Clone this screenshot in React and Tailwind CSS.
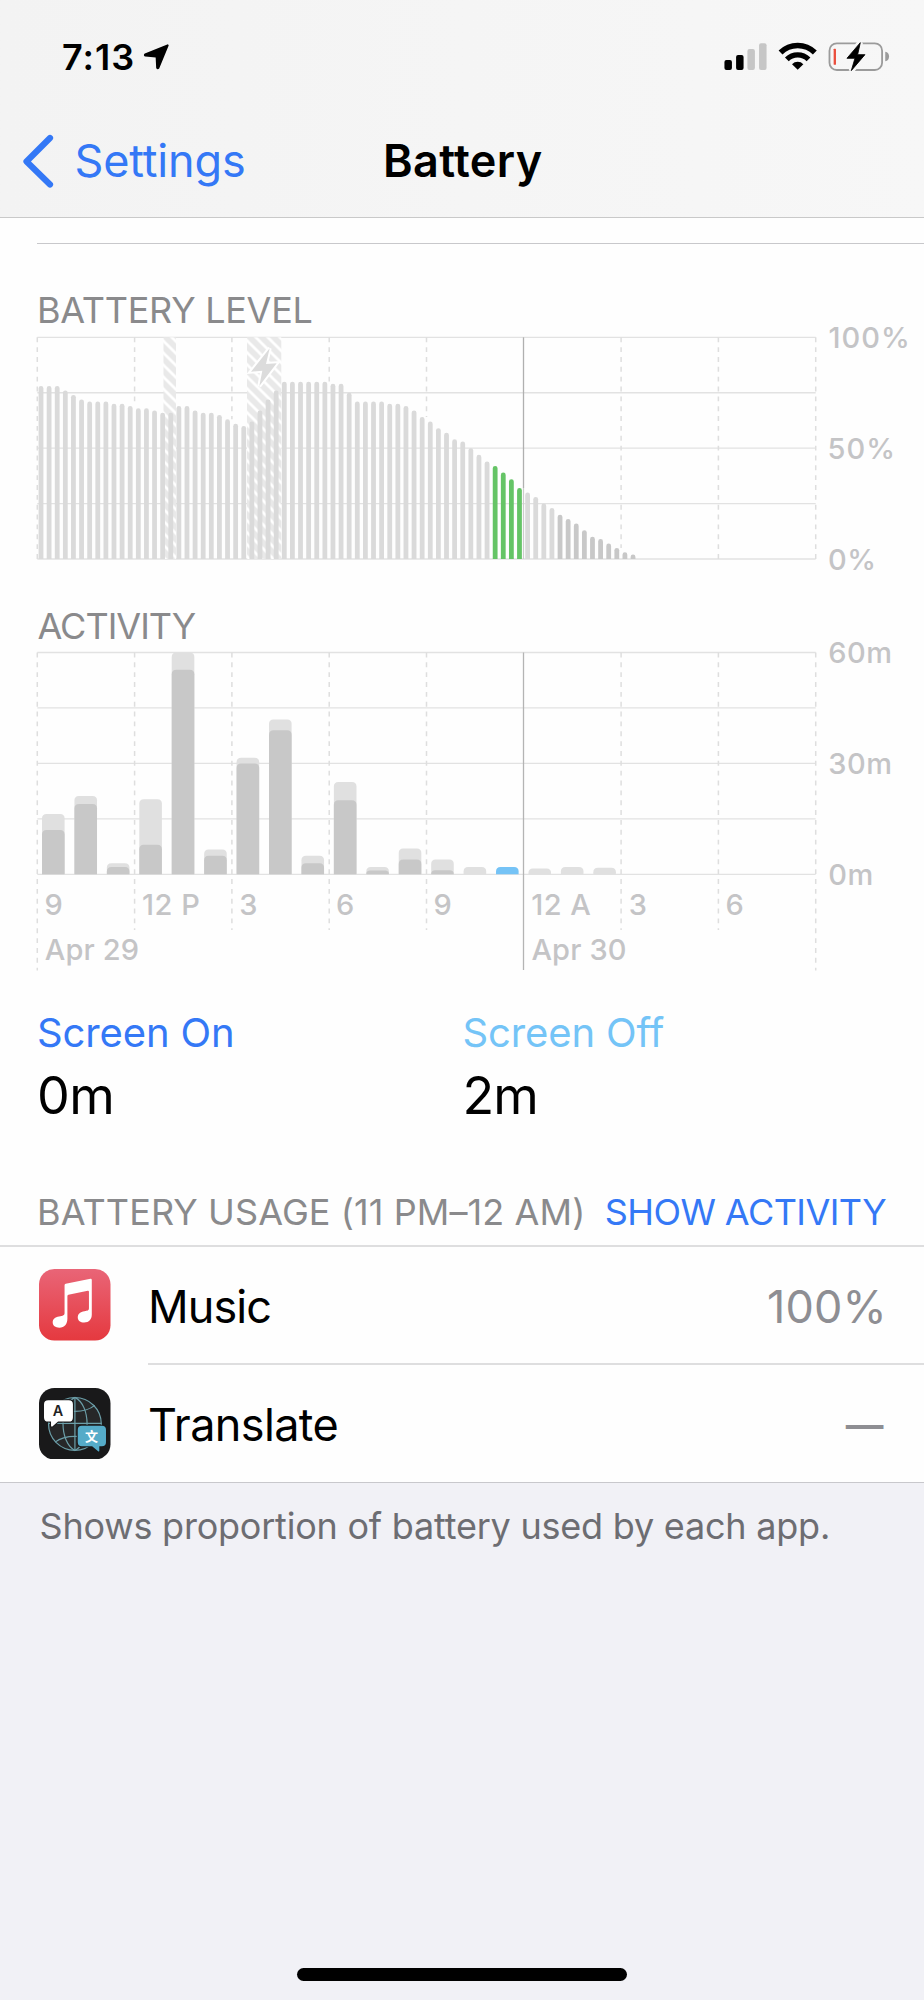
import React from "react";

/* ---------- Data ---------- */

// Battery percentage per 15 minutes, starting at 9 AM on Apr 29.
const LEVELS = [
  78, 78, 78, 76, 74, 72, 71, 71, 71, 70, 70, 69, 68, 68, 67, 66, 66, 69, 69, 67, 66, 66, 65, 63,
  61, 60, 62, 67, 72, 76, 80, 80, 80, 80, 80, 80, 79, 79, 75, 71, 71, 71, 71, 70, 70, 69, 67, 64,
  62, 59, 57, 54, 53, 50, 47, 44, 42, 39, 36, 32, 30, 28, 25, 23, 20, 18, 16, 13, 10, 9, 7, 5, 3, 2,
];

// Minutes per hour: [total, screen on].
const ACTIVITY = [
  [16.3, 12], [21.2, 19], [3, 2], [20.3, 8], [60, 55.3], [6.7, 5], [31.5, 30], [41.9, 39], [5, 3],
  [25, 20], [2, 1], [7, 4], [4, 1.1], [2, 0], [2, 0], [1.6, 0], [2, 0], [1.8, 0],
];
const SELECTED_HOUR = 14;

const LEFT = 37.3;
const STEP = 97.3;
const RIGHT = LEFT + STEP * 8;
const GRID = "#e2e2e2";
const DASH = "#dedede";

/* ---------- Status bar ---------- */

function LocationArrow() {
  return (
    <svg className="ml-[7.500px] h-[27px] w-[27px]" viewBox="427 129 80 80">
      <path
        d="M500 136 L433.500 163 Q431.500 165 434 166 L465 169 Q467.500 169.500 467.500 172 L469 202.500 Q470.500 205 472.500 202.500 Z"
        fill="#000"
        stroke="#000"
        strokeWidth="6"
        strokeLinejoin="round"
      />
    </svg>
  );
}

function StatusIcons() {
  return (
    <svg className="ml-auto mr-[33.300px] h-[33.300px] w-[166.700px]" viewBox="786 120 500 100">
      <rect x="787" y="180" width="22.500" height="30" rx="6" fill="#000" />
      <rect x="822" y="165" width="22.500" height="45" rx="6" fill="#000" />
      <rect x="856" y="147" width="22.500" height="63" rx="6" fill="#c6c6c6" />
      <rect x="891" y="130" width="22.500" height="80" rx="6" fill="#c6c6c6" />
      <path d="M955.500 157.500 A73 73 0 0 1 1058.500 157.500" fill="none" stroke="#000" strokeWidth="16.500" />
      <path d="M974.500 178 A46 46 0 0 1 1039.500 178" fill="none" stroke="#000" strokeWidth="16" />
      <path d="M1007 209.500 L990 192.500 A24.500 24.500 0 0 1 1024 192.500 Z" fill="#000" />
      <rect x="1102.500" y="130" width="158" height="80" rx="22" fill="none" stroke="#9b9b9b" strokeWidth="5.500" />
      <path d="M1270 155.500 A14 14.500 0 0 1 1270 184 Z" fill="#9b9b9b" />
      <rect x="1115" y="146" width="7" height="48.500" rx="2" fill="#eb4e3d" />
      <path
        d="M1195 127 L1154 176 L1178 176 L1168 213 L1210 163 L1187 163 Z"
        fill="#f7f7f7"
        stroke="#f7f7f7"
        strokeWidth="16"
      />
      <path
        d="M1195 128 L1155 175 L1179 175 L1168 212 L1209 164 L1187 164 Z"
        fill="#000"
        stroke="#000"
        strokeWidth="2.500"
        strokeLinejoin="round"
      />
    </svg>
  );
}

/* ---------- Charts ---------- */

function GridLines({ top, step }) {
  return [0, 1, 2, 3, 4].map((i) => (
    <line key={i} x1={LEFT} x2={RIGHT} y1={top + step * i} y2={top + step * i} stroke={GRID} strokeWidth="1.300" />
  ));
}

function AxisText({ x, y, spacing, children }) {
  return (
    <text x={x} y={y} fontSize="29" fontWeight="500" fill="#c4c4c6" style={{ letterSpacing: spacing }}>
      {children}
    </text>
  );
}

function LevelChart() {
  const top = 337.3;
  const height = 221.7;
  const base = top + height;
  const barTop = (v) => base - (v / 100) * height;
  return (
    <svg className="block h-[267px] w-full overflow-visible" viewBox="0 328 924 267">
      <defs>
        <pattern id="hatch" width="12" height="12" patternUnits="userSpaceOnUse" x="163.500" y="341">
          <rect width="12" height="12" fill="#e9e9e9" />
          <path d="M-2 -2 L14 14 M-2 10 L2 14 M10 -2 L14 2" stroke="#fff" strokeWidth="2.700" />
        </pattern>
      </defs>
      <GridLines top={top} step={height / 4} />
      <rect x="163.500" y={top} width="12.500" height={height} fill="url(#hatch)" />
      <rect x="247" y={top} width="34.300" height={height} fill="url(#hatch)" />
      {[0, 1, 2, 3, 4, 6, 7, 8].map((i) => {
        const v = i === 0 ? 0 : LEVELS[i * 12 - 1] || 0;
        const end = Math.max(top, barTop(v));
        return (
          <line key={i} x1={LEFT + STEP * i} x2={LEFT + STEP * i} y1={top} y2={end} stroke={DASH} strokeWidth="1.500" strokeDasharray="4.900 4.950" />
        );
      })}
      <line x1={LEFT + STEP * 5 - 0.3} x2={LEFT + STEP * 5 - 0.3} y1={top} y2={barTop(32)} stroke="#b0b0b0" strokeWidth="1.300" />
      <line x1={LEFT + STEP * 5 - 0.3} x2={LEFT + STEP * 5 - 0.3} y1={barTop(32)} y2={base} stroke="#cdcdcd" strokeWidth="1.200" />
      {LEVELS.map((v, i) => {
        const x = 38.6 + i * 8.11;
        const y = barTop(v);
        const fill = i >= 56 && i < 60 ? "#65c466" : i >= 64 ? "#c8c8c8" : "#dadada";
        const r = Math.min(2.4, base - y);
        return (
          <path
            key={i}
            d={`M${x} ${base} V${y + r} A2.400 2.400 0 0 1 ${x + 4.8} ${y + r} V${base} Z`}
            fill={fill}
          />
        );
      })}
      <path
        d="M749 205 L693 275 L727 272 L718 318 L770 250 L738 252 Z"
        transform="translate(20 280) scale(0.33333)"
        fill="#dcdcdc"
        stroke="#fff"
        strokeWidth="12"
        paintOrder="stroke"
      />
      <AxisText x={828.5} y={348} spacing="1px">100%</AxisText>
      <AxisText x={827.500} y={458.7} spacing="1px">50%</AxisText>
      <AxisText x={828} y={569.7} spacing="0.600px">0%</AxisText>
    </svg>
  );
}

function roundedBar(x, y, base) {
  const w = 22.6;
  const r = Math.min(4.5, base - y);
  return `M${x} ${base} V${y + r} Q${x} ${y} ${x + r} ${y} H${x + w - r} Q${x + w} ${y} ${x + w} ${y + r} V${base} Z`;
}

function ActivityChart() {
  const top = 652.5;
  const height = 221.8;
  const base = top + height;
  const barTop = (m) => base - (m / 60) * height;
  const hours = [
    ["9", 44.5, 0], ["12 P", 142, 0.5], ["3", 239.3, 0], ["6", 336, 0], ["9", 433.5, 0],
    ["12 A", 531.2, 0.5], ["3", 628.7, 0], ["6", 725.5, 0],
  ];
  return (
    <svg className="block h-[338px] w-full overflow-visible" viewBox="0 644 924 338">
      <GridLines top={top} step={height / 4} />
      {[0, 1, 2, 3, 4, 6, 7, 8].map((i) => (
        <line
          key={i}
          x1={LEFT + STEP * i}
          x2={LEFT + STEP * i}
          y1={top}
          y2={i === 0 || i === 8 ? 970.5 : 930}
          stroke={DASH}
          strokeWidth="1.500"
          strokeDasharray="4.900 4.950"
        />
      ))}
      <line x1={LEFT + STEP * 5 - 0.3} x2={LEFT + STEP * 5 - 0.3} y1={top} y2="970" stroke="#b4b4b4" strokeWidth="1.300" />
      {ACTIVITY.map(([total, on], i) => {
        const x = 42 + i * 32.43;
        return (
          <g key={i}>
            <path d={roundedBar(x, barTop(total), base)} fill={i === SELECTED_HOUR ? "#75c3f6" : "#e0e0e0"} />
            {on > 0 && <path d={roundedBar(x, barTop(on), base)} fill="#c8c8c8" />}
          </g>
        );
      })}
      {hours.map(([t, x, s], i) => (
        <AxisText key={i} x={x} y={914.5} spacing={`${s}px`}>{t}</AxisText>
      ))}
      <AxisText x={44.800} y={959.5} spacing="0.150px">Apr 29</AxisText>
      <AxisText x={531.4} y={959.5} spacing="0.150px">Apr 30</AxisText>
      <AxisText x={828.3} y={663} spacing="0.500px">60m</AxisText>
      <AxisText x={828.3} y={774} spacing="0.500px">30m</AxisText>
      <AxisText x={828.3} y={885} spacing="0.500px">0m</AxisText>
    </svg>
  );
}

/* ---------- App icons ---------- */

function MusicIcon() {
  return (
    <svg className="h-[71.500px] w-[71.500px]" viewBox="0 0 214 214">
      <defs>
        <linearGradient id="music" x1="0" y1="0" x2="0" y2="1">
          <stop offset="0" stopColor="#e96577" />
          <stop offset="1" stopColor="#e5393f" />
        </linearGradient>
      </defs>
      <rect width="214" height="214" rx="46" fill="url(#music)" />
      <path
        d="M76.500 49 Q76.500 45.500 80 44.500 L154 29.500 Q158 29 158 33 V136 C158 150 150 160 135 160 C124 160 116 154 116 145 C116 134 124 128 136 126.500 C146 125.500 149.500 124 149.500 117 V68 Q149.500 64.500 146 65 L88 77 Q85 77.500 85 81 V148 C85 165 76 175.500 61 175.500 C49 175.500 41 169 41 160 C41 150 48 144 60 142 C72 140.500 76.500 139 76.500 132 Z"
        fill="#fff"
      />
    </svg>
  );
}

function TranslateIcon() {
  return (
    <svg className="h-[71.500px] w-[71.500px]" viewBox="0 0 214 214">
      <rect width="214" height="214" rx="46" fill="#19191a" />
      <g fill="none" stroke="#6b9ea8" strokeWidth="3.600">
        <circle cx="107.500" cy="107.500" r="79" fill="#262728" />
        <path d="M107.500 28 V187 M28 106 H187" />
        <path d="M107.500 28 C156 52 156 162 107.500 187 C60 162 60 52 107.500 28" />
        <path d="M48 52 C78 76 137 76 167 52" />
        <path d="M48 162 C78 139 137 139 167 162" />
      </g>
      <path
        d="M28 36.500 H89 Q101.500 36.500 101.500 49 V88 Q101.500 100.500 89 100.500 H57 L40 115 Q36 117 36 112 V100.500 H28 Q15 100.500 15 88 V49 Q15 36.500 28 36.500 Z"
        fill="#fff"
        stroke="#19191a"
        strokeWidth="6"
        paintOrder="stroke"
      />
      <path
        d="M128 113 H188 Q200.500 113 200.500 125 V162 Q200.500 174 188 174 H180.500 V187 Q180.500 191.500 177 189 L159 174 H128 Q116 174 116 162 V125 Q116 113 128 113 Z"
        fill="#55abc8"
        stroke="#19191a"
        strokeWidth="6"
        paintOrder="stroke"
      />
      <text x="57" y="84.500" textAnchor="middle" fontSize="43" fontWeight="600" fill="#222">A</text>
      <text x="157" y="159" textAnchor="middle" fontSize="39" fontWeight="700" fill="#fff" fontFamily="'Noto Sans CJK SC', sans-serif">
        文
      </text>
    </svg>
  );
}

/* ---------- Page ---------- */

export default function App() {
  return (
    <div className="flex h-[2000px] w-[924px] flex-col overflow-hidden bg-[#f1f1f6] font-['Inter',sans-serif] text-black">
      <header className="h-[218px] border-b border-[#c9c9c9] bg-linear-to-r from-[#f3f3f3] to-[#f7f7f7]">
        <div className="flex h-[113px] items-center">
          <span className="ml-[62px] text-[36px] leading-none font-semibold tracking-[1px]">7:13</span>
          <LocationArrow />
          <StatusIcons />
        </div>
        <nav className="grid h-[95px] grid-cols-[385px_1fr] items-center">
          <a className="flex items-center text-[#3478f6]">
            <svg className="ml-[21.500px] h-[54px] w-[32px]" viewBox="0 0 32 54" fill="none" stroke="#3478f6" strokeWidth="6.200" strokeLinecap="round" strokeLinejoin="round">
              <path d="M28 4 L4.500 27.500 L28 50.500" />
            </svg>
            <span className="ml-[21px] text-[45px] leading-none tracking-[-0.150px]">Settings</span>
          </a>
          <h1 className="-ml-[2px] text-[45px] leading-none font-semibold tracking-[0.350px]">Battery</h1>
        </nav>
      </header>

      <main className="bg-[#fefefe]">
        <div className="ml-[37px] mt-[25px] h-px bg-[#c8c8cb]" />

        <section>
          <h2 className="h-[84px] pt-[48px] pl-[37px] text-[36px] leading-[36px] tracking-[-0.270px] text-[#8a8a8c]">BATTERY LEVEL</h2>
          <LevelChart />
        </section>

        <section>
          <h2 className="h-[49px] pt-[13px] pl-[37.500px] text-[36px] leading-[36px] tracking-[-1px] text-[#8a8a8c]">ACTIVITY</h2>
          <ActivityChart />
        </section>

        <section className="grid h-[139px] grid-cols-[425.500px_1fr] pt-[31px] pl-[37px]">
          <div>
            <div className="text-[40px] leading-[40px] tracking-[-0.130px] text-[#3478f6]">Screen On</div>
            <div className="mt-[17px] text-[52px] leading-[52px] tracking-[-0.500px]">0m</div>
          </div>
          <div>
            <div className="text-[40px] leading-[40px] tracking-[-0.130px] text-[#74c4f7]">Screen Off</div>
            <div className="mt-[17px] text-[52px] leading-[52px] tracking-[-0.900px]">2m</div>
          </div>
        </section>

        <section>
          <div className="flex h-[126px] items-start justify-between border-b-2 border-[#dededf] pt-[73px] pr-[38px] pl-[37px] text-[36px] leading-[36px] whitespace-nowrap">
            <h2 className="tracking-[0.100px] text-[#8a8a8c]">BATTERY USAGE (11 PM–12 AM)</h2>
            <button className="tracking-[-0.570px] text-[#3478f6]">SHOW ACTIVITY</button>
          </div>
          <div className="flex h-[118px] pl-[39.300px]">
            <div className="flex h-[116px] items-center"><MusicIcon /></div>
            <div className="ml-[37.200px] flex flex-1 items-center justify-between border-b-2 border-[#dededf] pt-[2px] pr-[37px] text-[45px] leading-none">
              <span className="tracking-[-0.930px]">Music</span>
              <span className="tracking-[0.200px] text-[#8e8e93]">100%</span>
            </div>
          </div>
          <div className="flex h-[118px] items-center border-b border-[#c8c8cc] pl-[39.300px]">
            <TranslateIcon />
            <div className="ml-[37.200px] flex flex-1 items-center justify-between pt-px pr-[40.500px] text-[45px] leading-none">
              <span className="tracking-[-0.620px]">Translate</span>
              <span className="pt-[2px] text-[37.700px] font-semibold text-[#8e8e93]">—</span>
            </div>
          </div>
        </section>
      </main>

      <p className="pt-[25px] pl-[39.500px] text-[36px] leading-[36px] tracking-[-0.220px] text-[#6d6d72]">
        Shows proportion of battery used by each app.
      </p>
      <div className="mx-auto mt-auto mb-[19.500px] h-[12.500px] w-[330.500px] rounded-full bg-black" />
    </div>
  );
}
